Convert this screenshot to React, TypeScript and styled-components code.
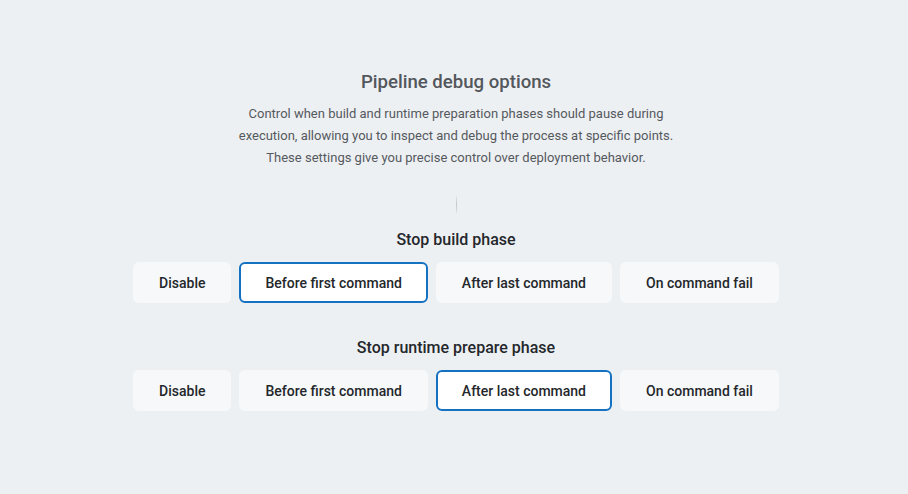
import React, { useState } from "react";
import styled, { createGlobalStyle } from "styled-components";

const Global = createGlobalStyle`
  html, body { margin: 0; padding: 0; background: #edf0f3; }
  body { font-family: Roboto, "Liberation Sans", Arial, sans-serif; -webkit-font-smoothing: antialiased; }
`;

const Page = styled.div`
  min-height: 494px;
  box-sizing: border-box;
  padding-top: 70px;
  display: flex;
  flex-direction: column;
  align-items: center;
  padding-left: 4px;
`;

const Title = styled.h1`
  margin: 0;
  font-size: 18.6px;
  line-height: 24px;
  font-weight: 500;
  color: #53575c;
`;

const Description = styled.p`
  margin: 9px 0 0;
  font-size: 13px;
  line-height: 22px;
  color: #55595e;
  text-align: center;
  max-width: 460px;
`;

const Divider = styled.div`
  width: 1px;
  height: 17px;
  margin-top: 27px;
  background: linear-gradient(to bottom, rgba(190,195,200,0.3), #c2c7cc 50%, rgba(190,195,200,0.3));
`;

const Section = styled.section<{ $first?: boolean }>`
  display: flex;
  flex-direction: column;
  align-items: center;
  margin-top: ${(p) => (p.$first ? "17px" : "35px")};
`;

const SectionTitle = styled.h2`
  margin: 0;
  font-size: 16px;
  line-height: 20px;
  font-weight: 500;
  color: #24272b;
`;

const Options = styled.div`
  display: flex;
  gap: 8px;
  margin-top: 12px;
`;

const Option = styled.button<{ $active?: boolean }>`
  height: 41px;
  box-sizing: border-box;
  padding: 0 24px;
  border-radius: 6px;
  border: 2px solid ${(p) => (p.$active ? "#1572c2" : "transparent")};
  background: ${(p) => (p.$active ? "#ffffff" : "#f6f8fa")};
  font-family: inherit;
  font-size: 14px;
  font-weight: 500;
  color: #24272b;
  cursor: pointer;
  white-space: nowrap;
`;

const choices = ["Disable", "Before first command", "After last command", "On command fail"];

function Group({ title, initial, first }: { title: string; initial: number; first?: boolean }) {
  const [sel, setSel] = useState(initial);
  return (
    <Section $first={first}>
      <SectionTitle>{title}</SectionTitle>
      <Options>
        {choices.map((c, i) => (
          <Option key={c} $active={sel === i} onClick={() => setSel(i)}>
            {c}
          </Option>
        ))}
      </Options>
    </Section>
  );
}

export default function App() {
  return (
    <>
      <Global />
      <Page>
        <Title>Pipeline debug options</Title>
        <Description>
          Control when build and runtime preparation phases should pause during
          execution, allowing you to inspect and debug the process at specific points.
          These settings give you precise control over deployment behavior.
        </Description>
        <Divider />
        <Group title="Stop build phase" initial={1} first />
        <Group title="Stop runtime prepare phase" initial={2} />
      </Page>
    </>
  );
}
